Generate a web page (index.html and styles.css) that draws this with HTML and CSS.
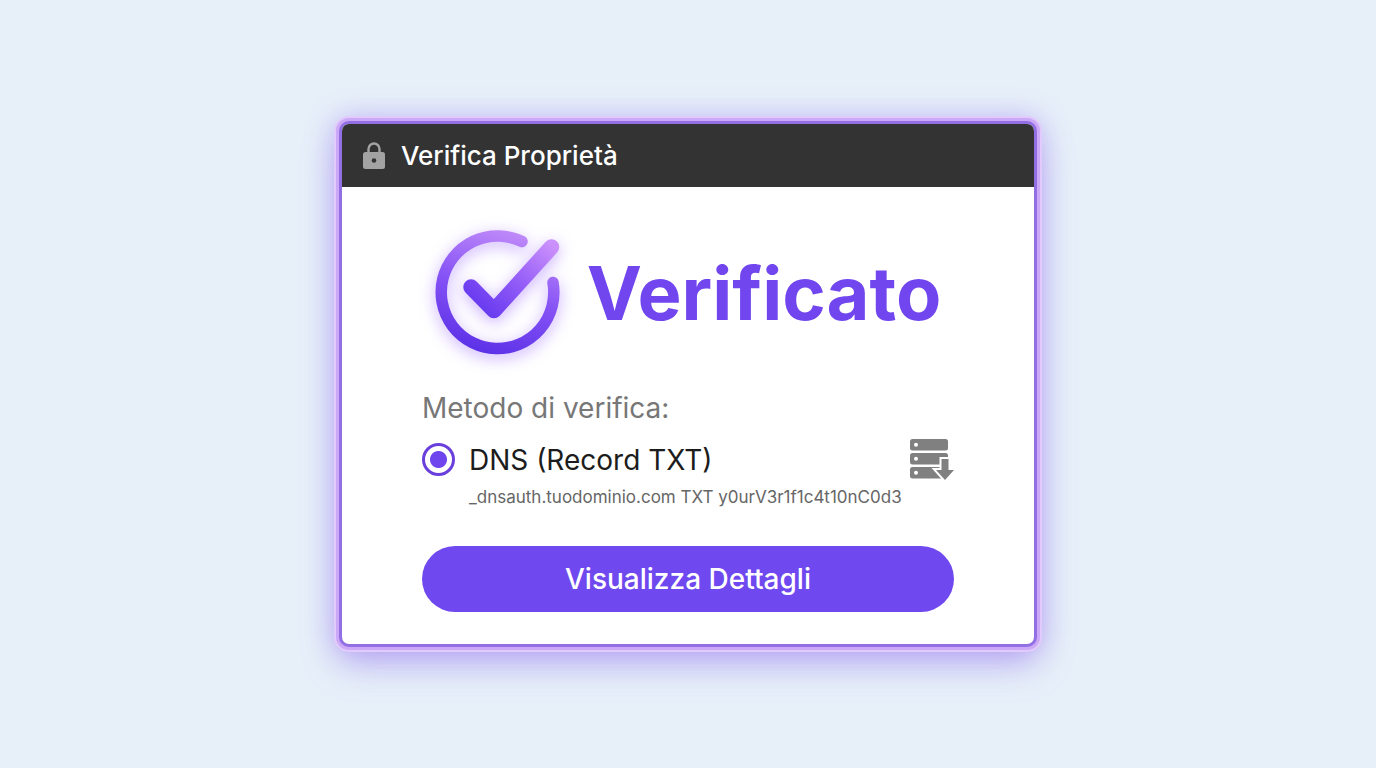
FILE: index.html
```html
<!DOCTYPE html>
<html lang="it">
<head>
    <meta charset="UTF-8">
    <meta name="viewport" content="width=device-width, initial-scale=1.0">
    <title>Verifica Proprietà</title>
    <link rel="stylesheet" href="styles.css">
</head>
<body>
    <main class="card">
        <header class="card-header">
            <svg class="lock-icon" viewBox="0 0 22 28" aria-hidden="true">
                <path d="M5.500 12V7a5.500 5.500 0 0 1 11 0V12" fill="none" stroke="#a3a3a3" stroke-width="2.400"/>
                <rect x="0" y="10" width="22" height="17" rx="2.500" fill="#a3a3a3"/>
                <circle cx="11" cy="18.500" r="2.300" fill="#333"/>
            </svg>
            <h1>Verifica Proprietà</h1>
        </header>

        <div class="card-body">
            <div class="status">
                <svg class="status-icon" viewBox="0 0 128 124" aria-hidden="true">
                    <defs>
                        <linearGradient id="ring" gradientUnits="userSpaceOnUse" x1="45" y1="124" x2="82" y2="2">
                            <stop offset="0" stop-color="#5b30e6"/>
                            <stop offset="0.500" stop-color="#8552f5"/>
                            <stop offset="1" stop-color="#c08af9"/>
                        </linearGradient>
                        <linearGradient id="tick" gradientUnits="userSpaceOnUse" x1="54" y1="84" x2="116" y2="14">
                            <stop offset="0" stop-color="#6a3cf0"/>
                            <stop offset="0.500" stop-color="#975ff8"/>
                            <stop offset="1" stop-color="#ca90fb"/>
                        </linearGradient>
                    </defs>
                    <g fill="none" stroke-linecap="round" stroke-linejoin="round">
                        <path d="M87 11.500A56.300 56.300 0 1 0 118 52.500" stroke="url(#ring)" stroke-width="11.500"/>
                        <path d="M36 57L59 80.500L116.500 17" stroke="url(#tick)" stroke-width="15.500"/>
                    </g>
                </svg>
                <p class="status-text">Verificato</p>
            </div>

            <h2>Metodo di verifica:</h2>
            <div class="method">
                <input type="radio" id="dns" name="method" checked>
                <div class="method-info">
                    <label for="dns">DNS (Record TXT)</label>
                    <p class="record">_dnsauth.tuodominio.com TXT y0urV3r1f1c4t10nC0d3</p>
                </div>
                <svg class="server-icon" viewBox="0 0 44 42" aria-hidden="true">
                    <g fill="#808080">
                        <rect x="0" y="0" width="38" height="11.500" rx="2.500"/>
                        <rect x="0" y="14" width="38" height="11.500" rx="2.500"/>
                        <rect x="0" y="28" width="38" height="11.500" rx="2.500"/>
                    </g>
                    <g fill="#fff">
                        <circle cx="6" cy="5.700" r="2"/>
                        <circle cx="6" cy="19.700" r="2"/>
                        <circle cx="6" cy="33.700" r="2"/>
                    </g>
                    <path d="M31.500 20h7v11H44L35 41L26 31h5.500z" fill="#fff" stroke="#fff" stroke-width="4"/>
                    <path d="M31.500 20h7v11H44L35 41L26 31h5.500z" fill="#808080"/>
                </svg>
            </div>

            <button type="button" class="btn">Visualizza Dettagli</button>
        </div>
    </main>
</body>
</html>
```

FILE: styles.css
```css
* {
    box-sizing: border-box;
}
body {
    font-family: Inter, "Liberation Sans", sans-serif;
    background: #e7f0f9;
    margin: 0;
    min-height: 100vh;
    display: flex;
    align-items: center;
    justify-content: center;
}
h1, h2, p {
    margin: 0;
}
.card {
    width: 100%;
    max-width: 698px;
    background: #fff;
    border: 3px solid #9270e4;
    border-radius: 10px;
    box-shadow:
        0 0 0 3px #cba8f8,
        0 0 0 5px #e2cbfc,
        0 0 28px 4px rgba(140, 100, 240, 0.35),
        0 16px 36px rgba(130, 90, 235, 0.4);
}
.card-header {
    display: flex;
    align-items: center;
    gap: 16px;
    height: 63px;
    padding: 0 21px;
    background: #333;
    border-radius: 7px 7px 0 0;
}
.lock-icon {
    width: 22px;
    height: 28px;
}
.card-header h1 {
    color: #fff;
    font-size: 26px;
    font-weight: 500;
    line-height: 32px;
}
.card-body {
    padding: 43px 80px 32px;
}
.status {
    display: flex;
    align-items: center;
    justify-content: center;
    gap: 24px;
    margin-bottom: 36px;
}
.status-icon {
    width: 128px;
    height: 124px;
    overflow: visible;
    filter: drop-shadow(0 4px 8px rgba(140, 80, 255, 0.45));
}
.status-text {
    color: #7146ef;
    font-size: 74px;
    font-weight: 700;
    line-height: 90px;
    padding-top: 2px;
}
h2 {
    color: #777;
    font-size: 28px;
    font-weight: 400;
    line-height: 36px;
    margin-bottom: 13px;
}
.method {
    display: flex;
    align-items: flex-start;
    gap: 14px;
    margin-bottom: 37px;
}
.method input {
    appearance: none;
    flex: none;
    width: 33px;
    height: 33px;
    margin: 4px 0 0;
    border: 3px solid #6a40dc;
    border-radius: 50%;
    background: radial-gradient(circle, #6f45ee 8px, #fff 9px);
}
.method-info {
    flex: 1;
    min-width: 0;
}
.method label {
    display: block;
    color: #1c1c1c;
    font-size: 28px;
    line-height: 42px;
}
.record {
    color: #666;
    font-size: 17px;
    line-height: 24px;
    margin-top: 4px;
    white-space: nowrap;
}
.server-icon {
    flex: none;
    width: 44px;
    height: 42px;
}
.btn {
    display: block;
    width: 100%;
    height: 66px;
    border: none;
    border-radius: 33px;
    background: #6f48ef;
    color: #fff;
    font-family: inherit;
    font-size: 28px;
    font-weight: 500;
    cursor: pointer;
}
.btn:hover {
    background: #6039e0;
}
```
